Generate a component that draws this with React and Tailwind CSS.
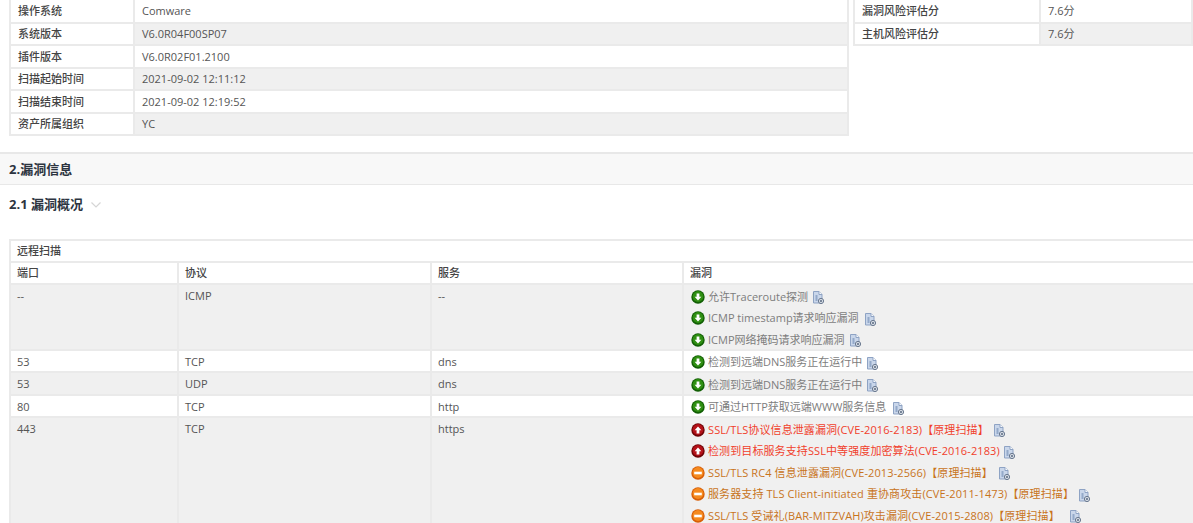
import React from 'react';

const font = { fontFamily: '"Open Sans", "Noto Sans CJK SC", sans-serif' };

const baseInfo = [
    ['操作系统', 'Comware'],
    ['系统版本', 'V6.0R04F00SP07'],
    ['插件版本', 'V6.0R02F01.2100'],
    ['扫描起始时间', '2021-09-02 12:11:12'],
    ['扫描结束时间', '2021-09-02 12:19:52'],
    ['资产所属组织', 'YC'],
];

const scores = [
    ['漏洞风险评估分', '7.6分'],
    ['主机风险评估分', '7.6分'],
];

const G = 'low', R = 'high', O = 'mid';

const ports = [
    { port: '--', proto: 'ICMP', svc: '--', items: [[G, '允许Traceroute探测', 5], [G, 'ICMP timestamp请求响应漏洞', 6], [G, 'ICMP网络掩码请求响应漏洞', 5]] },
    { port: '53', proto: 'TCP', svc: 'dns', items: [[G, '检测到远端DNS服务正在运行中', 5]] },
    { port: '53', proto: 'UDP', svc: 'dns', items: [[G, '检测到远端DNS服务正在运行中', 5]] },
    { port: '80', proto: 'TCP', svc: 'http', items: [[G, '可通过HTTP获取远端WWW服务信息', 7]] },
    {
        port: '443', proto: 'TCP', svc: 'https', items: [
            [R, 'SSL/TLS协议信息泄露漏洞(CVE-2016-2183)【原理扫描】', 5],
            [R, '检测到目标服务支持SSL中等强度加密算法(CVE-2016-2183)', 4],
            [O, 'SSL/TLS RC4 信息泄露漏洞(CVE-2013-2566)【原理扫描】', 6],
            [O, '服务器支持 TLS Client-initiated 重协商攻击(CVE-2011-1473)【原理扫描】', 5],
            [O, 'SSL/TLS 受诫礼(BAR-MITZVAH)攻击漏洞(CVE-2015-2808)【原理扫描】', 10],
        ]
    },
];

function LevelIcon({ level }) {
    const colors = { low: ['#2f8f12', '#125f05'], high: ['#b5121a', '#6f0407'], mid: ['#f58a1f', '#d85f08'] }[level];
    return (
        <svg width="14" height="14" viewBox="0 0 14 14" className="shrink-0">
            <circle cx="7" cy="7" r="6.7" fill={colors[1]} />
            <circle cx="7" cy="6.5" r="5.4" fill={colors[0]} />
            {level === 'low' && <path d="M5.6 3.5h2.8v3.2h2L7 10.4 3.6 6.7h2z" fill="#fff" />}
            {level === 'high' && <path d="M5.6 10.4h2.8V7.2h2L7 3.5 3.6 7.2h2z" fill="#fff" />}
            {level === 'mid' && <rect x="3.2" y="5.7" width="7.6" height="2.6" fill="#fff" />}
        </svg>
    );
}

function DocIcon() {
    return (
        <svg width="11" height="13" viewBox="0 0 11 13" className="shrink-0">
            <path d="M.5.5h5.5l3 3v8.5h-8.5z" fill="#c9d6ea" stroke="#8ea3c4" />
            <path d="M6 .5v3h3" fill="#fff" stroke="#8ea3c4" />
            <path d="M2.5 5h2M2.5 7h2M2.5 9h2" stroke="#5f7da8" />
            <circle cx="8" cy="10" r="2.6" fill="#e8edf4" stroke="#66758c" />
            <path d="M6.8 10h2.4M8 8.8v2.4" stroke="#55657d" />
        </svg>
    );
}

function InfoTable({ rows, labelW, className }) {
    return (
        <table className={`table-fixed border-collapse text-[11px] text-[#555] ${className}`}>
            <colgroup>
                <col style={{ width: labelW }} />
                <col />
            </colgroup>
            <tbody>
                {rows.map(([label, value], i) => (
                    <tr key={label} className="h-[22.5px]">
                        <td className="border-2 border-t-0 border-[#eaeaea] pl-[7px] pt-[1px] font-medium text-[#444]">{label}</td>
                        <td className={`border-2 border-t-0 border-[#eaeaea] pl-[7px] pt-[1px] ${i % 2 ? 'bg-[#f0f0f0]' : 'bg-white'}`}>{value}</td>
                    </tr>
                ))}
            </tbody>
        </table>
    );
}

export default function App() {
    return (
        <div className="w-[1193px] h-[523px] overflow-hidden bg-white" style={font}>
            <div className="flex items-start pl-[9px] gap-[4px]">
                <InfoTable rows={baseInfo} labelW="124px" className="w-[840px]" />
                <InfoTable rows={scores} labelW="186px" className="w-[340px]" />
            </div>

            <div className="mt-[16px] h-[33px] flex items-center pl-[9px] pt-[1px] border-t-[2px] border-b border-[#e8e8e8] bg-[#f8f8f8] text-[13px] font-bold text-[#2c3440]">
                2.漏洞信息
            </div>

            <div className="h-[39px] flex items-center pl-[9px] text-[13px] font-bold text-[#2c3440] gap-[7px]">
                <span>2.1 漏洞概况</span>
                <svg width="12" height="8" viewBox="0 0 12 8"><path d="M1.5 1.5 6 6l4.5-4.5" fill="none" stroke="#d5d5d5" strokeWidth="1.2" /></svg>
            </div>

            <div className="mt-[15px] ml-[9px] w-[1190px] border-t-2 border-l-2 border-[#eaeaea] text-[11px] text-[#555]">
                <div className="h-[22px] flex items-center pl-[6px] pt-[1px] font-medium text-[#444] border-b-2 border-[#eaeaea]">远程扫描</div>
                <table className="table-fixed border-collapse w-full">
                    <colgroup>
                        <col className="w-[167px]" />
                        <col className="w-[253px]" />
                        <col className="w-[252px]" />
                        <col />
                    </colgroup>
                    <thead>
                        <tr className="h-[21px] text-left font-medium text-[#444]">
                            {['端口', '协议', '服务', '漏洞'].map(h => (
                                <th key={h} className="pl-[6px] pt-[1px] font-medium border-r-2 border-b-2 border-[#eaeaea]">{h}</th>
                            ))}
                        </tr>
                    </thead>
                    <tbody>
                        {ports.map((row, i) => (
                            <tr key={i} className={i % 2 ? 'bg-white' : 'bg-[#f0f0f0]'}>
                                <td className="align-top pl-[6px] pt-[3px] border-r-2 border-b-2 border-[#eaeaea]">{row.port}</td>
                                <td className="align-top pl-[6px] pt-[3px] border-r-2 border-b-2 border-[#eaeaea]">{row.proto}</td>
                                <td className="align-top pl-[6px] pt-[3px] border-r-2 border-b-2 border-[#eaeaea]">{row.svc}</td>
                                <td className="align-top border-b-2 border-[#eaeaea] pl-[7px]">
                                    <div className="pt-[1px] -mb-[2px]">
                                        {row.items.map(([level, text, gap]) => (
                                            <div key={text} className={`h-[21.5px] flex items-center ${level === 'high' ? 'text-[#f0402c] tracking-[0.1px]' : level === 'mid' ? 'text-[#c8741c] tracking-[0.1px]' : 'text-[#7d7d7d]'}`}>
                                                <LevelIcon level={level} />
                                                <span className="ml-[3px] whitespace-nowrap">{text}</span>
                                                <span className="mt-[2px]" style={{ marginLeft: gap }}><DocIcon /></span>
                                            </div>
                                        ))}
                                    </div>
                                </td>
                            </tr>
                        ))}
                    </tbody>
                </table>
            </div>
        </div>
    );
}
